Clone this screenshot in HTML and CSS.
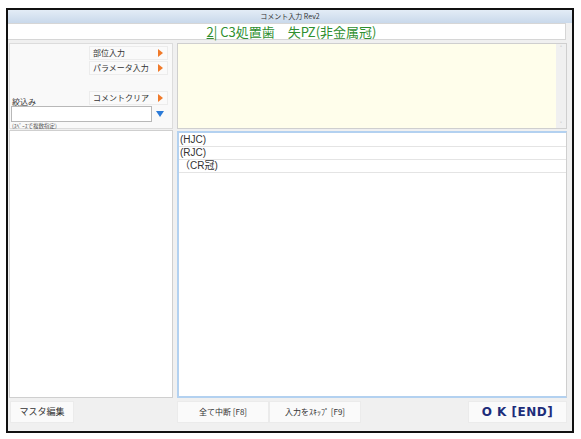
FILE: index.html
```html
<!DOCTYPE html>
<html lang="ja">
<head>
<meta charset="utf-8">
<link rel="stylesheet" href="styles.css">
</head>
<body>
<div class="window">
  <div class="titlebar">コメント入力 Rev2</div>
  <div class="header"><span class="hd"><u>2</u>| C3処置歯　失PZ(非金属冠)</span></div>
  <div class="main">
    <div class="leftcol">
      <div class="ctrl">
        <div class="btnrow"><div class="sbtn">部位入力<span class="tri"></span></div></div>
        <div class="btnrow"><div class="sbtn">パラメータ入力<span class="tri"></span></div></div>
        <div class="btnrow lower"><span class="lbl">絞込み</span><div class="sbtn">コメントクリア<span class="tri"></span></div></div>
        <div class="inrow"><div class="input"></div><span class="dtri"></span></div>
        <div class="hint">(ｽﾍﾟｰｽで複数指定)</div>
      </div>
      <div class="leftlist"></div>
    </div>
    <div class="rightcol">
      <div class="memo"><div class="scroll"><span class="ar">˄</span><span class="ar">˅</span></div></div>
      <div class="list">
        <div class="row">(HJC)</div>
        <div class="row">(RJC)</div>
        <div class="row">（CR冠)</div>
      </div>
    </div>
  </div>
  <div class="footer">
    <div class="fbtn master">マスタ編集</div>
    <div class="fbtn mid">全て中断 [F8]</div>
    <div class="fbtn mid">入力をｽｷｯﾌﾟ [F9]</div>
    <div class="spacer"></div>
    <div class="fbtn ok">O K [END]</div>
  </div>
</div>
</body>
</html>
```
FILE: styles.css
```css
* { box-sizing: border-box; }
html, body { margin: 0; padding: 0; background: #fff; }
body { font-family: "Noto Sans CJK JP", "Noto Sans", sans-serif; color: #333; }
.window {
  margin: 8px 0 0 6px;
  width: 568px;
  height: 425px;
  border: 2px solid #111;
  background: #f0f0f0;
  display: flex;
  flex-direction: column;
}
.titlebar {
  height: 13px;
  background: linear-gradient(#e3ecf6, #c9d9eb);
  font-size: 7px;
  line-height: 13px;
  text-align: center;
  color: #333;
}
.header {
  height: 17px;
  margin-right: 6px;
  background: #fff;
  border: 1px solid #d6d6d6;
  border-left: none;
  text-align: center;
  font-size: 13px;
  line-height: 15px;
  color: #2f8f2f;
}
.hd { padding-left: 10px; }
.hd u { text-decoration-thickness: 1px; text-underline-offset: 1px; }
.main {
  flex: 1;
  display: flex;
  gap: 4px;
  padding: 3px 5px 0 1px;
}
.leftcol { width: 164px; display: flex; flex-direction: column; gap: 1px; }
.ctrl {
  height: 86px;
  background: #f9f9f9;
  border: 1px solid #dcdcdc;
  position: relative;
  padding-top: 1px;
}
.btnrow { display: flex; justify-content: flex-end; align-items: center; height: 15px; padding-right: 4px; }
.btnrow.lower { margin-top: 15px; justify-content: space-between; align-items: flex-end; padding-left: 2px; }
.sbtn {
  width: 79px;
  height: 14px;
  background: #fafafa;
  border: 1px solid #ececec;
  font-size: 8px;
  line-height: 12px;
  padding-left: 3px;
  position: relative;
  color: #333;
}
.tri {
  position: absolute;
  right: 4px;
  top: 2px;
  width: 0; height: 0;
  border-top: 4px solid transparent;
  border-bottom: 4px solid transparent;
  border-left: 5px solid #f07a2a;
}
.lbl { font-size: 8px; line-height: 10px; color: #333; margin-bottom: -2px; }
.inrow { display: flex; align-items: center; padding-left: 1px; margin-top: 1px; }
.input { width: 141px; height: 16px; background: #fff; border: 1px solid #b8b8b8; }
.dtri {
  margin-left: 4px;
  width: 0; height: 0;
  border-left: 4px solid transparent;
  border-right: 4px solid transparent;
  border-top: 6px solid #2a7ad8;
}
.hint { font-size: 5.5px; line-height: 8px; padding-left: 2px; color: #555; }
.leftlist { flex: 1; background: #fff; border: 1px solid #cfcfcf; }
.rightcol { flex: 1; display: flex; flex-direction: column; gap: 2px; }
.memo {
  height: 86px;
  background: #fffeeb;
  border: 1px solid #cfcfcf;
  display: flex;
  justify-content: flex-end;
}
.scroll {
  width: 10px;
  background: #f0f0f0;
  display: flex;
  flex-direction: column;
  justify-content: space-between;
  align-items: center;
  font-size: 7px;
  line-height: 8px;
  color: #aaa;
}
.list {
  flex: 1;
  background: #fff;
  border: 2px solid #b3d1f0;
  border-right: 1px solid #cfcfcf;
  padding-top: 1px;
}
.row {
  height: 13px;
  border-bottom: 1px solid #e4e4e4;
  font-size: 10px;
  line-height: 12px;
  padding-left: 1px;
  color: #333;
  font-family: "Liberation Sans", "Noto Sans CJK JP", sans-serif;
}
.footer { height: 33px; display: flex; padding: 3px 5px 8px 2px; }
.fbtn {
  height: 22px;
  background: #fafafa;
  border: 1px solid #ebebeb;
  font-size: 8px;
  line-height: 20px;
  text-align: center;
  color: #333;
}
.master { width: 64px; font-size: 9px; }
.mid { width: 92px; }
.master + .mid { margin-left: 103px; }
.spacer { flex: 1; }
.ok { width: 99px; font-size: 12px; font-weight: bold; color: #1d2d7a; letter-spacing: 0.5px; font-family: "DejaVu Sans", sans-serif; }
```
